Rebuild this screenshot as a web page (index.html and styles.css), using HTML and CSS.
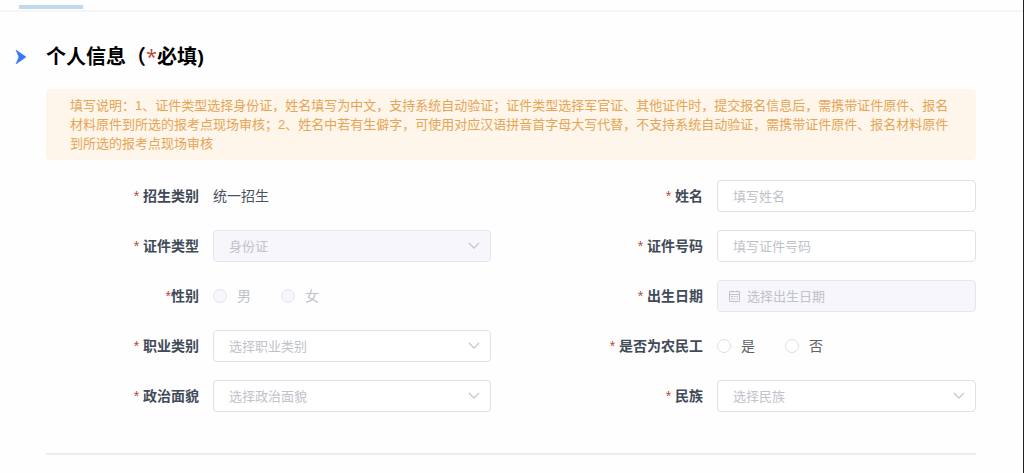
FILE: index.html
```
<!DOCTYPE html>
<html lang="zh-CN">
<head>
    <meta charset="UTF-8">
    <meta name="viewport" content="width=device-width, initial-scale=1.0">
    <title>个人信息</title>
    <link rel="stylesheet" href="styles.css">
</head>
<body>
    <div class="page">
        <div class="tabs">
            <div class="tab-active"></div>
        </div>

        <div class="section">
            <div class="section-title">
                <svg class="arrow" viewBox="0 0 12 16" width="12" height="16">
                    <path d="M1 1 L11 8 L1 15 L4 8 Z" fill="#3377fb" stroke="#3377fb" stroke-width="0.6"/>
                </svg>
                <h1>个人信息（<span class="required">*</span>必填)</h1>
            </div>

            <div class="section-body">
                <p class="notice">填写说明：1、证件类型选择身份证，姓名填写为中文，支持系统自动验证；证件类型选择军官证、其他证件时，提交报名信息后，需携带证件原件、报名材料原件到所选的报考点现场审核；2、姓名中若有生僻字，可使用对应汉语拼音首字母大写代替，不支持系统自动验证，需携带证件原件、报名材料原件到所选的报考点现场审核</p>

                <form class="form">
                    <div class="form-item">
                        <span class="form-label"><span class="required">*</span> 招生类别</span>
                        <span class="form-text">统一招生</span>
                    </div>
                    <div class="form-item">
                        <label class="form-label" for="name"><span class="required">*</span> 姓名</label>
                        <input class="input" type="text" id="name" placeholder="填写姓名">
                    </div>

                    <div class="form-item">
                        <label class="form-label" for="idType"><span class="required">*</span> 证件类型</label>
                        <div class="select-box">
                            <select class="input" id="idType" disabled>
                                <option>身份证</option>
                            </select>
                            <svg class="chevron" viewBox="0 0 12 8" width="12" height="8"><path d="M1 1 L6 6 L11 1"/></svg>
                        </div>
                    </div>
                    <div class="form-item">
                        <label class="form-label" for="idNumber"><span class="required">*</span> 证件号码</label>
                        <input class="input" type="text" id="idNumber" placeholder="填写证件号码">
                    </div>

                    <div class="form-item">
                        <span class="form-label"><span class="required">*</span>性别</span>
                        <div class="radio-group">
                            <label class="radio disabled"><input type="radio" name="gender" disabled>男</label>
                            <label class="radio disabled"><input type="radio" name="gender" disabled>女</label>
                        </div>
                    </div>
                    <div class="form-item">
                        <label class="form-label" for="birthday"><span class="required">*</span> 出生日期</label>
                        <div class="date-box">
                            <svg class="calendar" viewBox="0 0 13 13" width="13" height="13">
                                <path d="M1.5 1.5H11.5V11.5H1.5Z M1.5 4.5H11.5 M4 0.5V2.5 M9 0.5V2.5 M3 6.5H5 M6 6.5H7.5 M8.5 6.5H10 M3 9H5 M6 9H7.5 M8.5 9H10"/>
                            </svg>
                            <input type="text" id="birthday" placeholder="选择出生日期" disabled>
                        </div>
                    </div>

                    <div class="form-item">
                        <label class="form-label" for="job"><span class="required">*</span> 职业类别</label>
                        <div class="select-box">
                            <select class="input" id="job">
                                <option>选择职业类别</option>
                            </select>
                            <svg class="chevron" viewBox="0 0 12 8" width="12" height="8"><path d="M1 1 L6 6 L11 1"/></svg>
                        </div>
                    </div>
                    <div class="form-item">
                        <span class="form-label"><span class="required">*</span> 是否为农民工</span>
                        <div class="radio-group">
                            <label class="radio"><input type="radio" name="migrant">是</label>
                            <label class="radio"><input type="radio" name="migrant">否</label>
                        </div>
                    </div>

                    <div class="form-item">
                        <label class="form-label" for="political"><span class="required">*</span> 政治面貌</label>
                        <div class="select-box">
                            <select class="input" id="political">
                                <option>选择政治面貌</option>
                            </select>
                            <svg class="chevron" viewBox="0 0 12 8" width="12" height="8"><path d="M1 1 L6 6 L11 1"/></svg>
                        </div>
                    </div>
                    <div class="form-item">
                        <label class="form-label" for="nation"><span class="required">*</span> 民族</label>
                        <div class="select-box">
                            <select class="input" id="nation">
                                <option>选择民族</option>
                            </select>
                            <svg class="chevron" viewBox="0 0 12 8" width="12" height="8"><path d="M1 1 L6 6 L11 1"/></svg>
                        </div>
                    </div>
                </form>
            </div>
        </div>
    </div>
</body>
</html>
```

FILE: styles.css
```
* {
    box-sizing: border-box;
}

body {
    margin: 0;
    background-color: #fefefe;
    color: #606266;
    font-family: "Liberation Sans", "Noto Sans CJK SC", sans-serif;
    font-size: 14px;
    line-height: 20px;
}

.page {
    min-height: 100vh;
    border-right: 1px solid #222;
}

/* tab bar */
.tabs {
    height: 12px;
    padding: 5px 19px 0;
    border-bottom: 2px solid #f6f6f6;
}

.tab-active {
    width: 64px;
    height: 4px;
    background-color: #bfd9ee;
}

.section {
    padding: 30px 47px 0 15px;
}

.section-title {
    display: flex;
    align-items: center;
    gap: 19px;
}

h1 {
    margin: 0;
    color: #000;
    font-family: "Open Sans", "Noto Sans CJK SC", sans-serif;
    font-size: 20px;
    line-height: 30px;
    font-weight: bold;
}

.required {
    color: #b5483a;
    font-weight: normal;
}

.section-body {
    margin-left: 31px;
    padding-bottom: 41px;
    border-bottom: 2px solid #ededed;
}

.notice {
    margin: 17px 0 20px;
    padding: 7px 24px;
    border-radius: 4px;
    background-color: #fef5eb;
    color: #e6a555;
    font-size: 13px;
    line-height: 19px;
}

/* form */
.form {
    display: grid;
    grid-template-columns: 445fr 485fr;
    row-gap: 18px;
}

.form-item {
    display: flex;
    align-items: center;
    height: 32px;
}

.form-label {
    flex: none;
    width: 167px;
    padding-right: 14px;
    color: #414a58;
    font-weight: bold;
    text-align: right;
}

.form-item:nth-child(even) .form-label {
    width: 226px;
}

.form-text {
    color: #4b5260;
}

.input,
.date-box {
    flex: 1;
    width: 100%;
    min-width: 0;
    height: 32px;
    padding: 0 15px;
    border: 1px solid #dfe1e6;
    border-radius: 4px;
    background-color: #fff;
    color: #606266;
    font-family: inherit;
    font-size: 13px;
    outline: none;
}

.input:focus {
    border-color: #409eff;
}

input::placeholder {
    color: #c0c2c9;
    opacity: 1;
}

.select-box {
    display: grid;
    flex: 1;
    align-items: center;
}

.select-box .input,
.chevron {
    grid-area: 1 / 1;
}

.select-box .input {
    appearance: none;
    color: #c0c2c9;
}

.select-box .input:disabled,
.date-box {
    border-color: #e6e7ee;
    background-color: #f6f6fb;
    opacity: 1;
}

.chevron {
    justify-self: end;
    margin-right: 11px;
    fill: none;
    stroke: #c8cad0;
    stroke-width: 1.4;
    pointer-events: none;
}

.date-box {
    display: flex;
    align-items: center;
    gap: 6px;
    padding: 0 10px;
}

.date-box input {
    flex: 1;
    min-width: 0;
    padding: 0;
    border: none;
    background: none;
    font-family: inherit;
    font-size: 13px;
}

.calendar {
    fill: none;
    stroke: #c0c2c9;
}

.radio-group {
    display: flex;
    gap: 30px;
}

.radio {
    display: flex;
    align-items: center;
    gap: 10px;
}

.radio input {
    appearance: none;
    width: 14px;
    height: 14px;
    margin: 0;
    border: 1px solid #dcdfe6;
    border-radius: 50%;
    background-color: #fff;
}

.radio input:checked {
    border: 4px solid #409eff;
}

.radio.disabled {
    color: #c0c2c9;
}

.radio.disabled input {
    border-color: #e4e6ee;
    background-color: #f6f6fb;
}
```
